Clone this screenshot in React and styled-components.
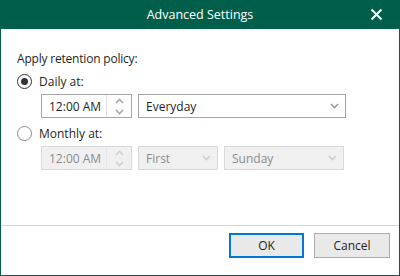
import React from "react";
import styled, { createGlobalStyle } from "styled-components";

const Global = createGlobalStyle`
  html, body { margin: 0; padding: 0; background: #fff; }
  body { font-family: "Open Sans", "Noto Sans", sans-serif; font-size: 12px; color: #1f1f1f; }
`;

const Window = styled.div`
  width: 400px;
  height: 276px;
  box-sizing: border-box;
  border: 1px solid #005f4b;
  border-top: none;
  display: flex;
  flex-direction: column;
  background: #fff;
`;

const TitleBar = styled.div`
  height: 29px;
  margin: 0 -1px;
  background: #005f4b;
  color: #fff;
  display: flex;
  align-items: center;
  justify-content: center;
  position: relative;
  font-size: 12.5px;
`;

const CloseBtn = styled.div`
  position: absolute;
  right: 17px;
  top: 8px;
  width: 13px;
  height: 13px;
`;

const Body = styled.div`
  flex: 1;
  padding: 22px 16px 0 16px;
  display: flex;
  flex-direction: column;
`;

const Heading = styled.div`
  line-height: 16px;
  margin-bottom: 6px;
  letter-spacing: -0.2px;
`;

const RadioRow = styled.label`
  display: flex;
  align-items: center;
  gap: 7px;
  height: 16px;
  color: #1f1f1f;
`;

const RadioCircle = styled.span`
  width: 15px;
  height: 15px;
  box-sizing: border-box;
  border-radius: 50%;
  border: 1px solid ${(p) => (p.$checked ? "#333" : "#888")};
  display: flex;
  align-items: center;
  justify-content: center;
  &::after {
    content: "";
    display: ${(p) => (p.$checked ? "block" : "none")};
    width: 7px;
    height: 7px;
    border-radius: 50%;
    background: #333;
  }
`;

const FieldRow = styled.div`
  display: flex;
  gap: 6px;
  padding-left: 24px;
  margin: ${(p) => p.$margin};
`;

const Box = styled.div`
  height: 24px;
  box-sizing: border-box;
  width: ${(p) => p.$w}px;
  border: 1px solid ${(p) => (p.$disabled ? "#d9d9d9" : "#a6a6a6")};
  background: ${(p) => (p.$disabled ? "#f0f0f0" : "#fff")};
  color: ${(p) => (p.$disabled ? "#8c8c8c" : "#1f1f1f")};
  display: flex;
  align-items: center;
  padding-left: 7px;
  padding-right: ${(p) => (p.$flush ? 0 : 0)}px;
`;

const Value = styled.span`
  flex: 1;
`;

const Spinner = styled.div`
  width: 24px;
  height: 100%;
  display: flex;
  flex-direction: column;
  border-left: 1px solid ${(p) => (p.$disabled ? "#e6e6e6" : "#e0e0e0")};
  span {
    flex: 1;
    display: flex;
    align-items: center;
    justify-content: center;
  }
`;

const Caret = styled.span`
  width: 22px;
  display: flex;
  justify-content: center;
  align-items: center;
`;

const Footer = styled.div`
  height: 42px;
  border-top: 1px solid #d4d4d4;
  display: flex;
  justify-content: flex-end;
  align-items: flex-start;
  padding: 7px 9px 0 0;
  gap: 10px;
`;

const Button = styled.button`
  width: ${(p) => p.$w}px;
  height: 25px;
  box-sizing: border-box;
  font: inherit;
  color: #1f1f1f;
  background: #e9e9e9;
  border: ${(p) => (p.$primary ? "2px solid #0078d7" : "1px solid #adadad")};
  padding: 0;
`;

const Chevron = ({ up, color = "#9a9a9a" }) => (
  <svg width="9" height="6" viewBox="0 0 9 6">
    <path
      d={up ? "M1 5 L4.5 1.5 L8 5" : "M1 1 L4.5 4.5 L8 1"}
      fill="none"
      stroke={color}
      strokeWidth="1.6"
    />
  </svg>
);

const TimeBox = ({ disabled }) => (
  <Box $w={91} $disabled={disabled}>
    <Value>12:00 AM</Value>
    <Spinner $disabled={disabled}>
      <span>
        <Chevron up color={disabled ? "#cfcfcf" : "#a8a8a8"} />
      </span>
      <span>
        <Chevron color={disabled ? "#cfcfcf" : "#a8a8a8"} />
      </span>
    </Spinner>
  </Box>
);

const Select = ({ w, value, disabled }) => (
  <Box $w={w} $disabled={disabled}>
    <Value>{value}</Value>
    <Caret>
      <Chevron color={disabled ? "#cfcfcf" : "#9a9a9a"} />
    </Caret>
  </Box>
);

export default function App() {
  return (
    <>
      <Global />
      <Window>
        <TitleBar>
          Advanced Settings
          <CloseBtn>
            <svg width="13" height="13" viewBox="0 0 13 13">
              <path d="M1.5 1.5 L11.5 11.5 M11.5 1.5 L1.5 11.5" stroke="#fff" strokeWidth="2" />
            </svg>
          </CloseBtn>
        </TitleBar>
        <Body>
          <Heading>Apply retention policy:</Heading>
          <RadioRow>
            <RadioCircle $checked />
            Daily at:
          </RadioRow>
          <FieldRow $margin="5px 0 7px">
            <TimeBox />
            <Select w={208} value="Everyday" />
          </FieldRow>
          <RadioRow>
            <RadioCircle />
            Monthly at:
          </RadioRow>
          <FieldRow $margin="5px 0 0">
            <TimeBox disabled />
            <Select w={80} value="First" disabled />
            <Select w={120} value="Sunday" disabled />
          </FieldRow>
        </Body>
        <Footer>
          <Button $primary $w={75}>OK</Button>
          <Button $w={76}>Cancel</Button>
        </Footer>
      </Window>
    </>
  );
}
